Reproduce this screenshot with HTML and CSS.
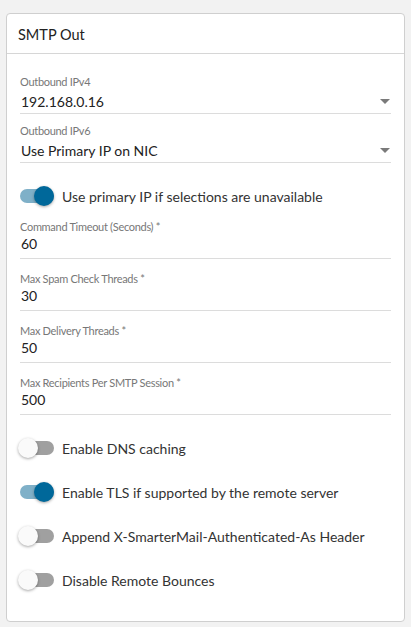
FILE: index.html
```html
<!DOCTYPE html>
<html>
<head>
<meta charset="utf-8">
<link rel="stylesheet" href="styles.css">
</head>
<body>
<div class="card">
  <div class="card-header">SMTP Out</div>
  <div class="card-body">
    <div class="select-field">
      <div class="label">Outbound IPv4</div>
      <div class="select-value"><span>192.168.0.16</span><span class="arrow"></span></div>
    </div>
    <div class="select-field">
      <div class="label">Outbound IPv6</div>
      <div class="select-value"><span>Use Primary IP on NIC</span><span class="arrow"></span></div>
    </div>
    <div class="toggle-row first-toggle">
      <span class="toggle on"><span class="knob"></span></span>
      <span class="toggle-text">Use primary IP if selections are unavailable</span>
    </div>
    <div class="text-fields">
      <div class="text-field">
        <div class="label">Command Timeout (Seconds) <span class="req">*</span></div>
        <div class="text-value">60</div>
      </div>
      <div class="text-field">
        <div class="label">Max Spam Check Threads <span class="req">*</span></div>
        <div class="text-value">30</div>
      </div>
      <div class="text-field">
        <div class="label">Max Delivery Threads <span class="req">*</span></div>
        <div class="text-value">50</div>
      </div>
      <div class="text-field">
        <div class="label">Max Recipients Per SMTP Session <span class="req">*</span></div>
        <div class="text-value">500</div>
      </div>
    </div>
    <div class="toggles">
      <div class="toggle-row">
        <span class="toggle"><span class="knob"></span></span>
        <span class="toggle-text">Enable DNS caching</span>
      </div>
      <div class="toggle-row">
        <span class="toggle on"><span class="knob"></span></span>
        <span class="toggle-text">Enable TLS if supported by the remote server</span>
      </div>
      <div class="toggle-row">
        <span class="toggle"><span class="knob"></span></span>
        <span class="toggle-text">Append X-SmarterMail-Authenticated-As Header</span>
      </div>
      <div class="toggle-row">
        <span class="toggle"><span class="knob"></span></span>
        <span class="toggle-text">Disable Remote Bounces</span>
      </div>
    </div>
  </div>
</div>
</body>
</html>
```

FILE: styles.css
```css
html, body {
  margin: 0;
  padding: 0;
}
body {
  background: #f2f2f2;
  font-family: "Lato", "Open Sans", sans-serif;
  color: #333;
  padding: 13px 6px 5px 6px;
  box-sizing: border-box;
  height: 627px;
}
.card {
  background: #fff;
  border: 1px solid #cfcfcf;
  border-radius: 4px;
  height: 609px;
  box-sizing: border-box;
}
.card-header {
  height: 40px;
  box-sizing: border-box;
  border-bottom: 1px solid #d6d6d6;
  padding: 0 11px;
  font-size: 14.5px;
  line-height: 41px;
  color: #222;
}
.card-body {
  padding: 19px 13px 0 13px;
  display: flex;
  flex-direction: column;
}
.label {
  font-size: 11px;
  letter-spacing: -0.3px;
  color: #777;
  height: 16px;
  line-height: 16px;
}
.select-field .label {
  height: 17px;
  line-height: 17px;
}
.req {
  color: #777;
}
.select-field {
  display: flex;
  flex-direction: column;
  margin-bottom: 8px;
}
.select-value {
  height: 23px;
  line-height: 23px;
  font-size: 14px;
  color: #222;
  border-bottom: 1px solid #dcdcdc;
  display: flex;
  justify-content: space-between;
  align-items: center;
  padding-left: 1px;
}
.arrow {
  width: 0;
  height: 0;
  border-left: 5px solid transparent;
  border-right: 5px solid transparent;
  border-top: 5px solid #7a7a7a;
  margin-right: 1px;
}
.toggle-row {
  display: flex;
  align-items: center;
  height: 24px;
}
.first-toggle {
  margin-top: 13px;
}
.toggle {
  position: relative;
  width: 34px;
  height: 14px;
  border-radius: 7px;
  background: #a0a0a0;
  margin-right: 8px;
  flex: none;
}
.toggle .knob {
  position: absolute;
  top: -3px;
  left: -2px;
  width: 20px;
  height: 20px;
  border-radius: 50%;
  background: #fafafa;
  box-shadow: 0 1px 3px rgba(0,0,0,0.35);
}
.toggle.on {
  background: #7fb0c8;
}
.toggle.on .knob {
  left: 14px;
  background: #00689a;
}
.toggle-text {
  font-size: 14px;
  color: #333;
}
.text-fields {
  display: flex;
  flex-direction: column;
  gap: 12px;
  margin-top: 11px;
}
.text-field {
  display: flex;
  flex-direction: column;
}
.text-value {
  font-size: 14px;
  line-height: 18px;
  height: 18px;
  padding-bottom: 5px;
  border-bottom: 1px solid #dcdcdc;
  padding-left: 1px;
  color: #222;
}
.toggles {
  display: flex;
  flex-direction: column;
  gap: 20px;
  margin-top: 21px;
}
```
